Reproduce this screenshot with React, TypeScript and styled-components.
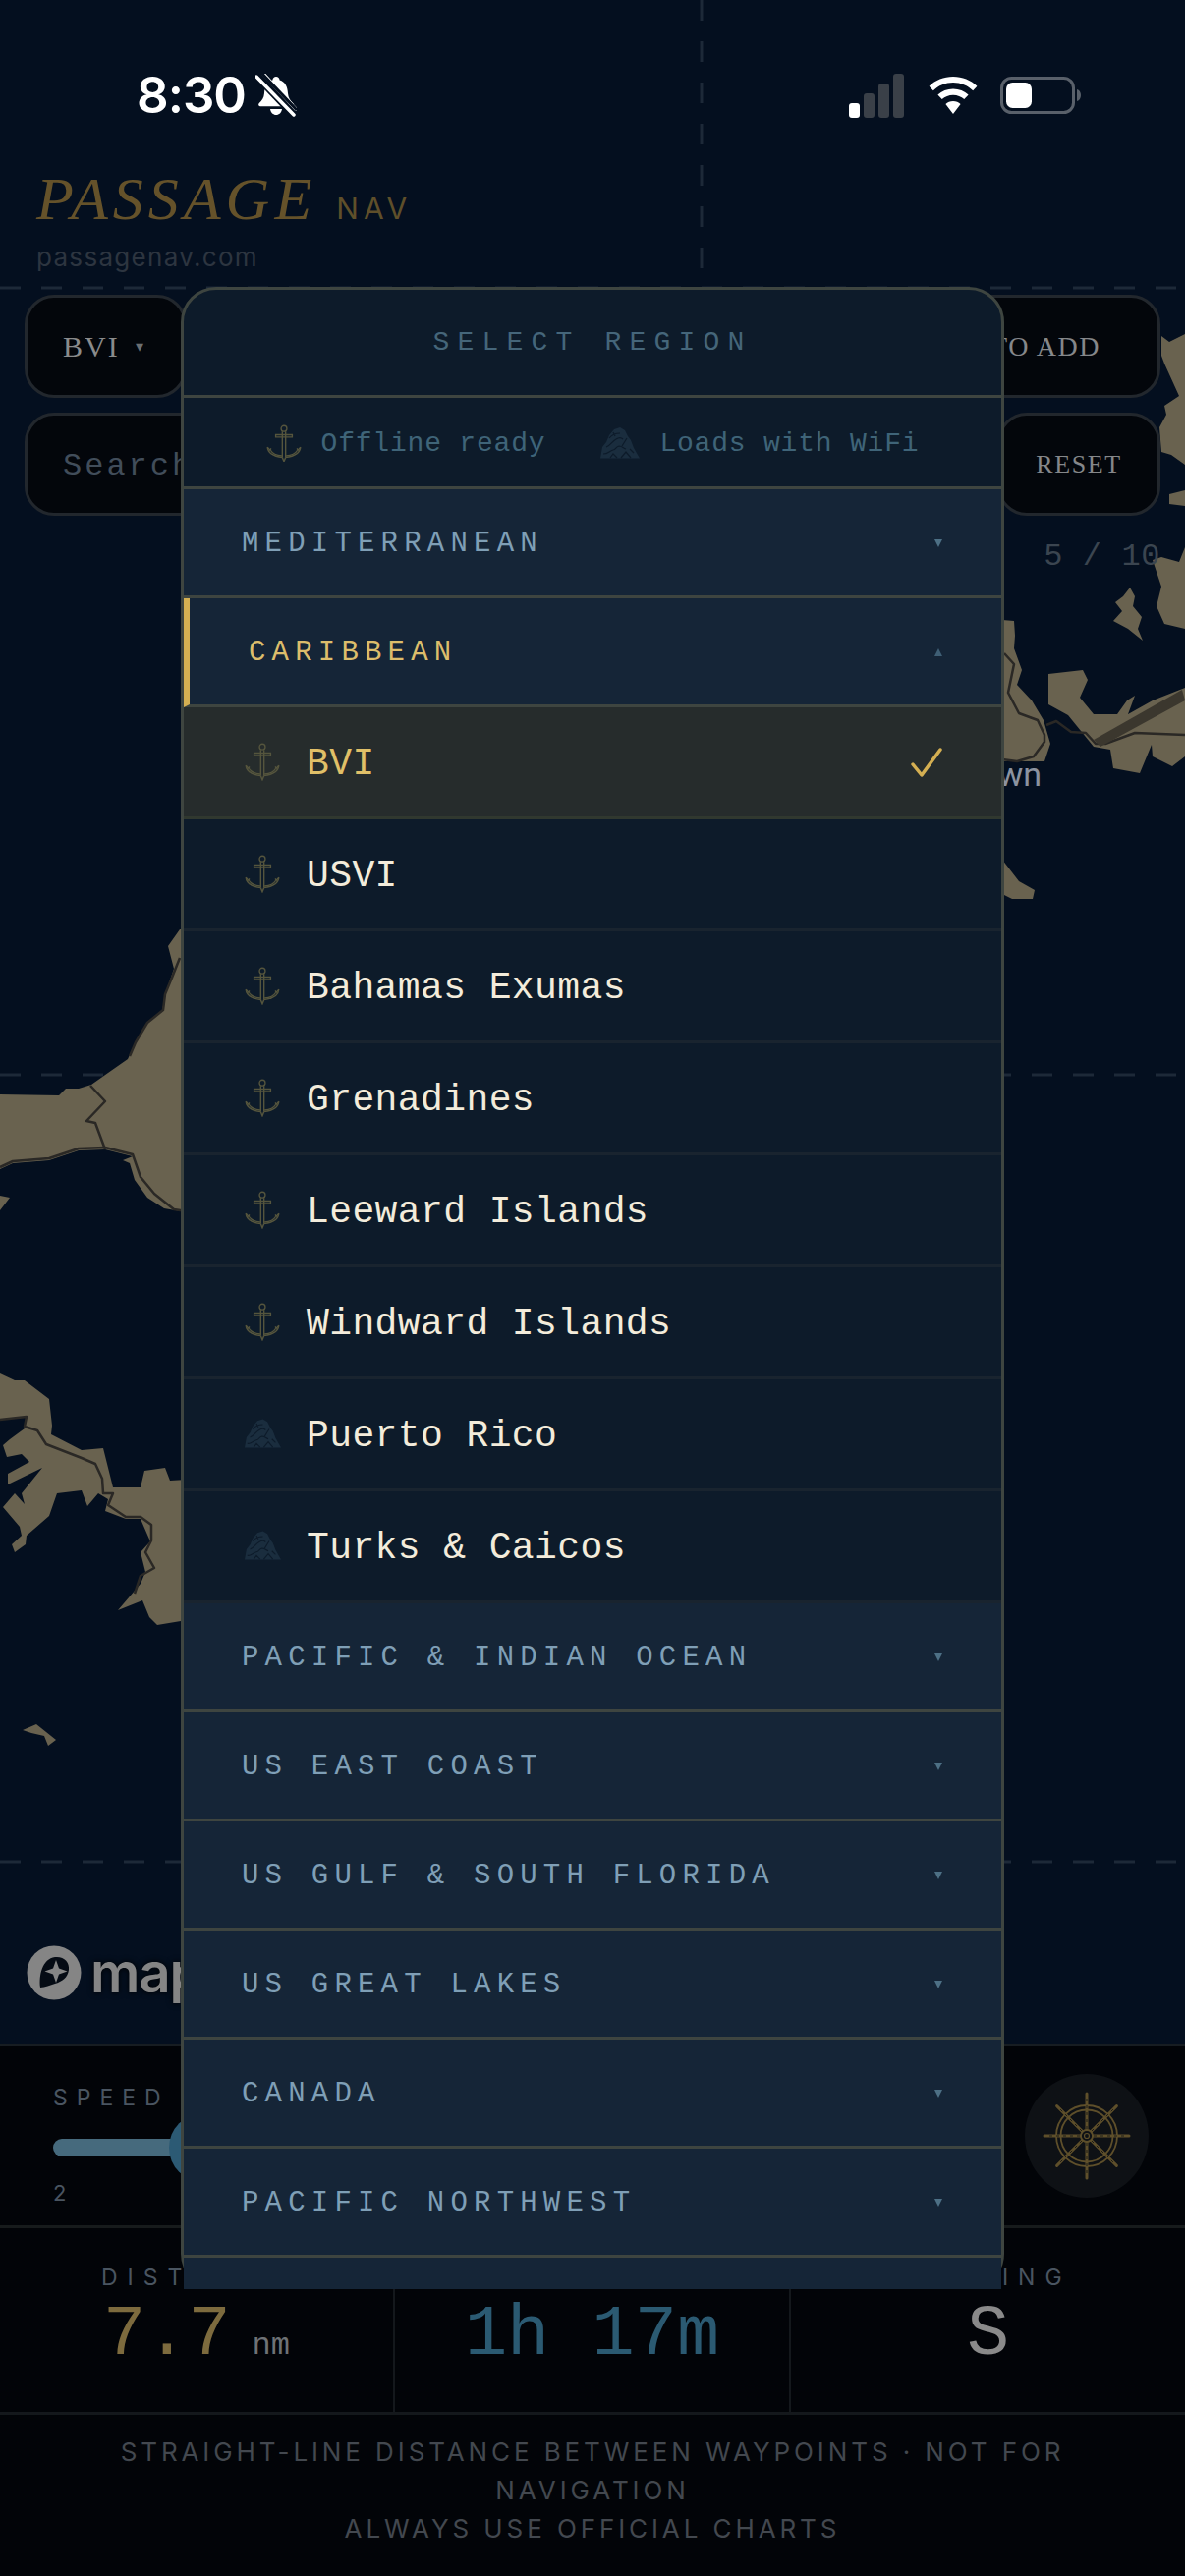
import styled, { createGlobalStyle } from "styled-components";

const MONO = `"Liberation Mono", "DejaVu Sans Mono", monospace`;
const SERIF = `"Liberation Serif", "Times New Roman", serif`;
const SANS = `Inter, "Liberation Sans", sans-serif`;

const GlobalStyle = createGlobalStyle`
  * { box-sizing: border-box; }
  html, body { margin: 0; padding: 0; background: #040f1f; }
`;

const Page = styled.div`
  position: relative;
  width: 1206px;
  height: 2622px;
  overflow: hidden;
  display: flex;
  flex-direction: column;
  background: #040f1f;
  font-family: ${SANS};
`;

const MapLayer = styled.svg`
  position: absolute;
  inset: 0;
  width: 1206px;
  height: 2622px;
`;

const StatusBar = styled.div`
  position: relative;
  height: 164px;
  flex: none;
  display: flex;
  align-items: flex-start;
  justify-content: space-between;
  padding: 68px 105px 0 139px;
`;

const TimeGroup = styled.div`
  display: flex;
  align-items: center;
  gap: 10px;
`;

const Clock = styled.span`
  font-family: ${SANS};
  font-weight: 600;
  font-size: 51px;
  line-height: 58px;
  letter-spacing: -1px;
  color: #fff;
`;

const StatusIcons = styled.div`
  display: flex;
  align-items: center;
  gap: 23px;
  height: 58px;
`;

const Brand = styled.div`
  position: relative;
  height: 128px;
  flex: none;
  padding: 2px 37px 0;
`;

const BrandLine = styled.div`
  display: flex;
  align-items: baseline;
  gap: 20px;
  height: 72px;
`;

const BrandName = styled.span`
  font-family: ${SERIF};
  font-style: italic;
  font-size: 62px;
  line-height: 72px;
  letter-spacing: 5px;
  color: #65522a;
`;

const BrandSuffix = styled.span`
  font-family: ${SANS};
  font-size: 30px;
  letter-spacing: 5px;
  color: #5f4f2a;
`;

const BrandUrl = styled.div`
  font-family: ${SANS};
  font-size: 26px;
  line-height: 36px;
  margin-top: 6px;
  letter-spacing: 1.3px;
  color: #2d3540;
`;

const ControlRow = styled.div`
  position: relative;
  flex: none;
  display: flex;
  gap: 14px;
  padding: 0 25px;
  height: 105px;
  margin-top: ${(p: { $top: number }) => p.$top}px;
`;

const ControlBase = styled.div`
  height: 105px;
  border: 3px solid #22272d;
  border-radius: 30px;
  background: #03060b;
  display: flex;
  align-items: center;
`;

const RegionButton = styled(ControlBase)`
  width: 165px;
  padding-left: 36px;
  gap: 16px;
  font-family: ${SERIF};
  font-size: 30px;
  letter-spacing: 2px;
  color: #8a8b8c;
  & small { font-size: 16px; color: #6b6f72; }
`;

const AddButton = styled(ControlBase)`
  flex: 1;
  justify-content: flex-end;
  padding-right: 58px;
  font-family: ${SERIF};
  font-size: 28px;
  letter-spacing: 1.5px;
  color: #85878a;
`;

const SearchField = styled(ControlBase)`
  flex: 1;
  padding: 4px 0 0 36px;
  font-family: ${MONO};
  font-size: 32px;
  letter-spacing: 3px;
  color: #414d5a;
`;

const ResetButton = styled(ControlBase)`
  width: 166px;
  flex: none;
  justify-content: center;
  font-family: ${SERIF};
  font-size: 26px;
  letter-spacing: 1.6px;
  color: #85878a;
`;

const MapArea = styled.div`
  position: relative;
  flex: 1;
  display: flex;
  flex-direction: column;
  justify-content: space-between;
  padding: 20px 25px 44px 27px;
`;

const Counter = styled.div`
  align-self: flex-end;
  font-family: ${MONO};
  font-size: 32px;
  line-height: 44px;
  letter-spacing: 0.6px;
  color: #3b4550;
  white-space: nowrap;
`;

const MapLogo = styled.div`
  display: flex;
  align-items: center;
  gap: 9px;
  font-family: ${SANS};
  font-weight: 600;
  font-size: 56px;
  line-height: 56px;
  letter-spacing: -1px;
  color: #858585;
  text-shadow: 0 0 6px #000;
`;

const BottomPanel = styled.div`
  position: relative;
  flex: none;
  background: #020408;
`;

const SpeedRow = styled.div`
  height: 188px;
  border-top: 3px solid #171d22;
  border-bottom: 3px solid #171b1c;
  padding: 0 37px 0 54px;
  display: flex;
  justify-content: space-between;
`;

const SpeedControl = styled.div`
  width: 800px;
  padding-top: 38px;
`;

const SpeedLabel = styled.div`
  font-family: ${SANS};
  font-size: 23px;
  line-height: 28px;
  letter-spacing: 9px;
  color: #4a5561;
`;

const SliderTrack = styled.div`
  position: relative;
  height: 18px;
  margin-top: 28px;
  width: 100%;
  border-radius: 9px;
  background: linear-gradient(to right, #466a7d 0 130px, #1c242b 130px);
`;

const SliderThumb = styled.div`
  position: absolute;
  left: 118px;
  top: -26px;
  width: 70px;
  height: 70px;
  border-radius: 50%;
  background: #2c5a74;
`;

const SpeedTick = styled.div`
  margin-top: 24px;
  font-family: ${SANS};
  font-size: 22px;
  line-height: 26px;
  color: #4a5561;
`;

const HelmButton = styled.div`
  width: 126px;
  height: 126px;
  margin-top: 28px;
  border-radius: 50%;
  background: #0e1115;
  display: flex;
  align-items: center;
  justify-content: center;
`;

const StatsRow = styled.div`
  height: 190px;
  border-bottom: 3px solid #14181c;
  display: grid;
  grid-template-columns: 402px 403px 1fr;
`;

const StatCell = styled.div`
  padding-top: 36px;
  display: flex;
  flex-direction: column;
  align-items: center;
  border-right: 2px solid #14181c;
  &:last-child { border-right: none; }
`;

const StatLabel = styled.div`
  font-family: ${SANS};
  font-size: 23px;
  line-height: 28px;
  letter-spacing: 10px;
  color: #4a5561;
`;

const StatValue = styled.div`
  font-family: ${MONO};
  font-size: 72px;
  line-height: 74px;
  color: ${(p: { $color: string }) => p.$color};
  margin-top: 8px;
  white-space: nowrap;
  & small {
    font-family: ${MONO};
    font-size: 32px;
    color: #6e7276;
    margin-left: 22px;
  }
`;

const Disclaimer = styled.div`
  flex: 1;
  height: 164px;
  padding: 18px 100px 0;
  text-align: center;
  font-family: ${SANS};
  font-size: 26px;
  line-height: 39px;
  letter-spacing: 3.9px;
  color: #43484f;
`;

/* region picker lying over the page */
const Sheet = styled.div`
  position: absolute;
  left: 184px;
  top: 292px;
  width: 838px;
  height: 2038px;
  border: 3px solid #3e4540;
  border-radius: 36px;
  background: #0d1b2a;
`;

const SheetTitle = styled.div`
  height: 110px;
  border-bottom: 3px solid #3e4540;
  border-radius: 33px 33px 0 0;
  display: flex;
  align-items: center;
  justify-content: center;
  font-family: ${MONO};
  font-size: 28px;
  letter-spacing: 8.2px;
  color: #45667a;
`;

const LegendRow = styled.div`
  height: 93px;
  border-bottom: 3px solid #3e4540;
  display: flex;
  align-items: center;
  justify-content: center;
  gap: 56px;
  padding-top: 2px;
  font-family: ${MONO};
  font-size: 28px;
  letter-spacing: 0.8px;
  color: #3f6478;
`;

const LegendItem = styled.div`
  display: flex;
  align-items: center;
  gap: 20px;
`;

const RegionList = styled.div`
  height: 1832px;
  overflow: hidden;
`;

const RegionHead = styled.div<{ $open?: boolean }>`
  height: 111px;
  border-bottom: 3px solid #3e4540;
  background: #152537;
  display: flex;
  align-items: center;
  justify-content: space-between;
  padding: 2px 60px 0 ${(p) => (p.$open ? 60 : 59)}px;
  border-left: ${(p) => (p.$open ? "6px solid #d4af52" : "none")};
  font-family: ${MONO};
  font-size: 29px;
  letter-spacing: 6.2px;
  color: ${(p) => (p.$open ? "#dcbd6b" : "#7f9fb6")};
`;

const Caret = styled.span`
  font-size: 0;
  width: 0;
  height: 0;
  border-left: 4.5px solid transparent;
  border-right: 4.5px solid transparent;
  ${(p: { $up?: boolean }) =>
    p.$up ? "border-bottom: 8px solid #3f5f75;" : "border-top: 8px solid #4d7085;"}
`;

const PlaceRow = styled.div<{ $selected?: boolean }>`
  height: 114px;
  border-bottom: 3px solid ${(p) => (p.$selected ? "#30382f" : "#19242f")};
  background: ${(p) => (p.$selected ? "#262c2c" : "#0d1b2a")};
  display: flex;
  align-items: center;
  padding: 0 60px 0 62px;
  gap: 26px;
  font-family: ${MONO};
  font-size: 38px;
  letter-spacing: 0.4px;
  color: ${(p) => (p.$selected ? "#e0c068" : "#f3ecdb")};
`;

const IconSlot = styled.span`
  width: 37px;
  flex: none;
  display: flex;
  align-items: center;
  justify-content: flex-start;
`;

const PlaceName = styled.span`
  flex: 1;
  padding-top: 4px;
`;

function Anchor({ size = 36, color = "#55553d" }: { size?: number; color?: string }) {
  return (
    <svg width={size} height={size * 1.08} viewBox="0 0 34 37" fill="none" stroke={color} strokeWidth="1.3">
      <circle cx="17" cy="4" r="2.8" />
      <path d="M9 10h16v2.2H9z" />
      <path d="M15.4 7v25M18.6 7v25" />
      <path d="M1 22l2.5 3 1-1.8M33 22l-2.5 3-1-1.8" />
      <path d="M1 22c.5 7 7 9 14.4 10M33 22c-.5 7-7 9-14.4 10M15.4 32l1.6 4 1.6-4" />
      <path d="M4 25c2 3.5 6 5 11 5.5M30 25c-2 3.5-6 5-11 5.5" />
    </svg>
  );
}

function Rock({ size = 40 }: { size?: number }) {
  return (
    <svg width={size} height={size * 0.8} viewBox="0 0 40 32">
      <path d="M0 31.500L2 20 6 15 9 8 14 2 20 0 25 3 28 9 31 13 34 21 40 31.500Z" fill="#1a2d3e" />
      <path
        d="M9 11c3-4 7-5 11-5M6 20c4-1 6-6 10-8 3-2 5-2 7 0M3 27c5 0 6-3 10-4 3 0 2-3 6-4 3 0 4 2 7 3M21 31l5-6 5 6M13 5l2 4M27 11l-5 8M10 31l3-4 4 4M34 26l-4-4"
        fill="none"
        stroke="#0d1b2a"
        strokeWidth="1.200"
      />
    </svg>
  );
}

function Helm() {
  const color = "#5e4f2a";
  const angles = [0, 45, 90, 135, 180, 225, 270, 315];
  return (
    <svg width="90" height="90" viewBox="0 0 90 90" fill="none" stroke={color}>
      <circle cx="45" cy="45" r="31" strokeWidth="1.8" />
      <circle cx="45" cy="45" r="26.5" strokeWidth="1.8" />
      {angles.map((a) => (
        <g key={a} transform={`rotate(${a} 45 45)`}>
          <path d="M45 39V2" strokeWidth="3" strokeLinecap="round" />
          <path d="M45 38V3" stroke="#0e1115" strokeWidth="0.8" strokeDasharray="3 4" />
        </g>
      ))}
      <circle cx="45" cy="45" r="6" strokeWidth="1.8" fill="#0e1115" />
      <circle cx="45" cy="45" r="2.5" strokeWidth="1.2" />
    </svg>
  );
}

function BellSlash() {
  return (
    <svg width="42" height="44" viewBox="0 0 42 44">
      <path
        d="M21 3c-2 0-3.4 1.4-3.6 3.4C11.600 8.400 9.400 13 9 20c-.4 4.600-2.400 7.400-5.200 10-1.300 1.300-.6 3.200 1.300 3.200h31.800c1.900 0 2.600-1.900 1.300-3.200-2.800-2.600-4.800-5.400-5.200-10-.4-7-2.600-11.600-8.400-13.600C24.400 4.400 23 3 21 3z"
        fill="#fff"
      />
      <path d="M15 36c.5 3.800 3 6 6 6s5.500-2.200 6-6z" fill="#fff" />
      <path d="M3 3l36 38" stroke="#040f1f" strokeWidth="9" />
      <path d="M1 3l38 39M8 0l33 36" stroke="#fff" strokeWidth="3.5" strokeLinecap="round" />
      <path d="M4 -3l38 40" stroke="#040f1f" strokeWidth="3" />
    </svg>
  );
}

function SignalBars() {
  const bars = [
    { x: 0, h: 15, c: "#fff" },
    { x: 15, h: 25, c: "#3a4048" },
    { x: 30, h: 35, c: "#3a4048" },
    { x: 45, h: 45, c: "#3a4048" },
  ];
  return (
    <svg width="58" height="46" viewBox="0 0 58 46">
      {bars.map((b) => (
        <rect key={b.x} x={b.x} y={46 - b.h} width="11" height={b.h} rx="3" fill={b.c} />
      ))}
    </svg>
  );
}

function WifiGlyph() {
  return (
    <svg width="50" height="38" viewBox="0 0 50 38">
      <path
        d="M25 0C15.500 0 7 3.600.6 9.700l4.200 4.500C10.100 9.100 17.200 6 25 6s14.900 3.100 20.200 8.200l4.200-4.500C43 3.600 34.500 0 25 0z"
        fill="#fff"
      />
      <path
        d="M25 12.500c-6 0-11.400 2.300-15.600 6.100l4.300 4.500c3-2.700 7-4.400 11.300-4.400s8.300 1.700 11.300 4.400l4.300-4.500C36.400 14.800 31 12.500 25 12.500z"
        fill="#fff"
      />
      <path d="M25 25c-3 0-5.700 1.100-7.600 3L25 38l7.600-10c-1.900-1.900-4.600-3-7.600-3z" fill="#fff" />
    </svg>
  );
}

function BatteryGlyph() {
  return (
    <svg width="83" height="38" viewBox="0 0 83 38">
      <rect x="1.500" y="1.500" width="73" height="35" rx="10" fill="none" stroke="#59606a" strokeWidth="3" />
      <rect x="6" y="6" width="26" height="26" rx="6.500" fill="#fff" />
      <path d="M78 13c2.500.6 4 3 4 6s-1.500 5.400-4 6z" fill="#59606a" />
    </svg>
  );
}

function LogoMark() {
  return (
    <svg width="56" height="56" viewBox="0 0 56 56">
      <circle cx="28" cy="28" r="27.500" fill="#858585" />
      <path
        d="M14 43c-1.500-13 2-29 15-31 9-1 15 5 14 13-1 8-7 12-14 14-5 1.500-10 3.500-15 4z"
        fill="#050b14"
      />
      <path d="M30 15l3 8.500L41.500 26.500 33 29.500 30 38l-3-8.500-8.500-3L27 23.500z" fill="#858585" />
    </svg>
  );
}

const LAND =
  "M183 946L171 963 177 986 168 1012 165 1029 150 1041 138 1061 130 1078 110 1092 93 1104 80 1108 67 1108 60 1115 0 1114V1190L13 1184 50 1181 80 1171 107 1170 135 1177 125 1181 132 1184 137 1201 150 1219 167 1230 190 1234 190 946Z " +
  "M0 1217L10 1219 0 1232Z " +
  "M0 1398L15 1405 25 1405 50 1424 53 1451 52 1460 83 1476 105 1474 115 1514 143 1514 147 1497 168 1494 173 1507 190 1506V1649L160 1654 152 1646 145 1629 120 1639 143 1612 148 1600 143 1580 153 1569 143 1546 128 1546 107 1538 110 1526 100 1520 89 1533 83 1517 58 1520 50 1543 27 1563 26 1572 15 1580 12 1572 22 1563 20 1554 3 1534 15 1520 25 1531 22 1520 43 1494 8 1511 8 1500 30 1488 22 1480 7 1483 3 1471 10 1465 25 1454 27 1442 0 1445Z " +
  "M23 1761L37 1755 57 1771 49 1777 45 1767 32 1764Z " +
  "M1020 631L1032 632 1033 647 1032 660 1040 682 1035 697 1050 713 1062 733 1069 757 1063 775 1020 775Z " +
  "M1067 686L1102 682 1107 692 1099 710 1113 727 1137 727 1147 713 1155 708 1148 727 1173 713 1206 700V770L1193 780 1173 770 1172 758 1160 787 1133 782 1130 763 1113 760 1087 728 1067 717Z " +
  "M1173 570L1182 567 1200 572 1206 557V640L1185 635 1177 617 1182 597Z " +
  "M1150 598L1155 607 1153 617 1162 628 1158 640 1163 652 1148 640 1133 632 1142 622 1135 613 1143 607Z " +
  "M1020 875L1037 897 1053 906 1051 915 1030 915 1020 910Z " +
  "M1182 342L1186 345 1190 348 1200 343 1206 340V473L1192 463 1182 460 1180 435 1187 422 1185 413 1200 403 1185 370 1182 362Z " +
  "M1190 503L1206 499V515L1190 513Z";

const BORDERS = [
  "M92 1105L107 1121 88 1141 97 1143 107 1170",
  "M0 1188L13 1182 50 1179 80 1169 107 1168 135 1175 143 1198 157 1215 177 1231 190 1233",
  "M183 975L175 995 168 1012 166 1028 150 1041 138 1061 132 1075",
  "M0 1445L27 1442 25 1452 38 1456 47 1470 83 1484 97 1490 104 1505 105 1520 115 1520 110 1532 128 1544 143 1544 154 1552 154 1568 148 1580 157 1596 143 1604 137 1622",
  "M1022 665L1032 676 1026 705 1037 726 1056 733 1063 748 1063 755 1052 770 1035 775 1020 773",
  "M1065 738L1075 734 1090 745 1105 746 1115 757 1125 757 1155 746 1206 748",
];

export default function App() {
  const caribbean = [
    { name: "BVI", offline: true, selected: true },
    { name: "USVI", offline: true },
    { name: "Bahamas Exumas", offline: true },
    { name: "Grenadines", offline: true },
    { name: "Leeward Islands", offline: true },
    { name: "Windward Islands", offline: true },
    { name: "Puerto Rico", offline: false },
    { name: "Turks & Caicos", offline: false },
  ];
  const moreRegions = [
    "PACIFIC & INDIAN OCEAN",
    "US EAST COAST",
    "US GULF & SOUTH FLORIDA",
    "US GREAT LAKES",
    "CANADA",
    "PACIFIC NORTHWEST",
    "ALASKA",
  ];

  return (
    <Page>
      <GlobalStyle />
      <MapLayer viewBox="0 0 1206 2622">
        <g stroke="#1d2938" strokeWidth="3" strokeDasharray="21 21" fill="none">
          <path d="M714 0V2080" />
          <path d="M0 293H1206M0 1094H1206M0 1895H1206" />
        </g>
        <path d={LAND} fill="#69624f" />
        <g fill="none" stroke="#2a2825" strokeWidth="2.500" strokeLinejoin="round">
          {BORDERS.map((d) => (
            <path key={d} d={d} />
          ))}
        </g>
        <path d="M1113 753L1203 702 1206 713 1120 760Z" fill="#3b372e" />
        <text x="1060" y="800" textAnchor="end" fontFamily="Roboto, sans-serif" fontSize="34" fill="#8c93a0">
          Road Town
        </text>
      </MapLayer>

      <StatusBar>
        <TimeGroup>
          <Clock>8:30</Clock>
          <BellSlash />
        </TimeGroup>
        <StatusIcons>
          <SignalBars />
          <WifiGlyph />
          <BatteryGlyph />
        </StatusIcons>
      </StatusBar>

      <Brand>
        <BrandLine>
          <BrandName>PASSAGE</BrandName>
          <BrandSuffix>NAV</BrandSuffix>
        </BrandLine>
        <BrandUrl>passagenav.com</BrandUrl>
      </Brand>

      <ControlRow $top={8}>
        <RegionButton>
          BVI <small>▾</small>
        </RegionButton>
        <AddButton>TAP TO ADD</AddButton>
      </ControlRow>
      <ControlRow $top={15}>
        <SearchField>Search</SearchField>
        <ResetButton>RESET</ResetButton>
      </ControlRow>

      <MapArea>
        <Counter>5 / 10</Counter>
        <MapLogo>
          <LogoMark />
          maptiler
        </MapLogo>
      </MapArea>

      <BottomPanel>
        <SpeedRow>
          <SpeedControl>
            <SpeedLabel>SPEED</SpeedLabel>
            <SliderTrack>
              <SliderThumb />
            </SliderTrack>
            <SpeedTick>2</SpeedTick>
          </SpeedControl>
          <HelmButton>
            <Helm />
          </HelmButton>
        </SpeedRow>
        <StatsRow>
          <StatCell>
            <StatLabel>DISTANCE</StatLabel>
            <StatValue $color="#7d6b3e">
              7.7<small>nm</small>
            </StatValue>
          </StatCell>
          <StatCell>
            <StatLabel>TIME</StatLabel>
            <StatValue $color="#2b5a72">1h 17m</StatValue>
          </StatCell>
          <StatCell>
            <StatLabel>BEARING</StatLabel>
            <StatValue $color="#8a8a8a">S</StatValue>
          </StatCell>
        </StatsRow>
        <Disclaimer>
          STRAIGHT-LINE DISTANCE BETWEEN WAYPOINTS · NOT FOR NAVIGATION
          <br />
          ALWAYS USE OFFICIAL CHARTS
        </Disclaimer>
      </BottomPanel>

      <Sheet>
        <SheetTitle>SELECT REGION</SheetTitle>
        <LegendRow>
          <LegendItem>
            <Anchor />
            Offline ready
          </LegendItem>
          <LegendItem>
            <Rock />
            Loads with WiFi
          </LegendItem>
        </LegendRow>
        <RegionList>
          <RegionHead>
            MEDITERRANEAN
            <Caret />
          </RegionHead>
          <RegionHead $open>
            CARIBBEAN
            <Caret $up />
          </RegionHead>
          {caribbean.map((place) => (
            <PlaceRow key={place.name} $selected={place.selected}>
              <IconSlot>{place.offline ? <Anchor /> : <Rock size={38} />}</IconSlot>
              <PlaceName>{place.name}</PlaceName>
              {place.selected && (
                <svg width="32" height="30" viewBox="0 0 32 30" fill="none" stroke="#d4af52" strokeWidth="3.500" strokeLinecap="round" strokeLinejoin="round">
                  <path d="M2 17l9 11L30 2" />
                </svg>
              )}
            </PlaceRow>
          ))}
          {moreRegions.map((region) => (
            <RegionHead key={region}>
              {region}
              <Caret />
            </RegionHead>
          ))}
        </RegionList>
      </Sheet>
    </Page>
  );
}
